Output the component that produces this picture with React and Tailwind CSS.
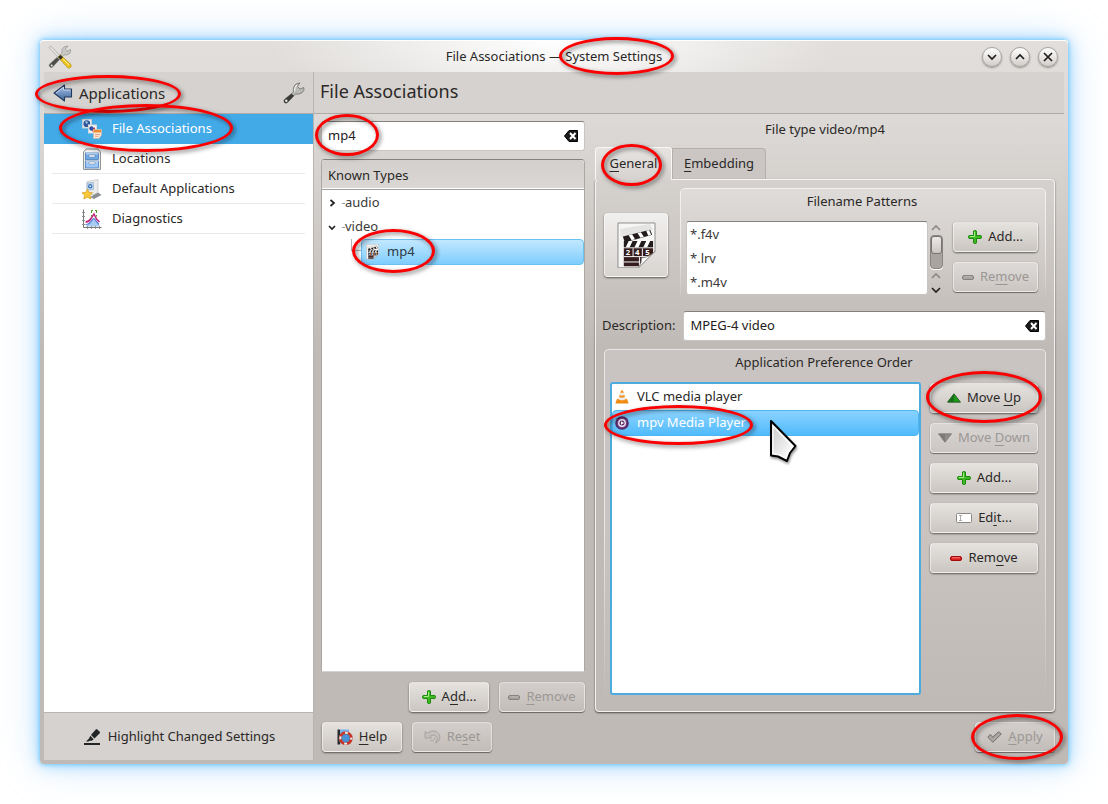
import React, { useState } from 'react'
import clsx from 'clsx'

const patterns = ['*.f4v', '*.lrv', '*.m4v']

/* ---------- icons ---------- */

function ToolsIcon() {
  return (
    <svg width="24" height="24" viewBox="0 0 24 24" aria-hidden="true">
      <path d="M2 22 Q0 20 2 18.500 L14 8 Q13 4 16 2 L20 1 L17.500 4 L19 6.500 L22.500 4.500 Q23.500 7 21 9 Q18.500 10.500 16 9.800 L5 21.500 Q3.500 23.500 2 22 Z" fill="#c9c9c7" stroke="#8a8a88" strokeWidth=".6" />
      <path d="M2 22 Q0.500 20.500 2 19 L9 12.500 L11.500 14.500 L5 21.500 Q3.500 23 2 22 Z" fill="#4c4c4a" />
      <circle cx="3.700" cy="20.400" r="1" fill="#eee" />
      <path d="M1 2.500 L3 1 L12 11 L10.500 12.500 Z" fill="#e4e4e2" stroke="#999" strokeWidth=".6" />
      <path d="M10 12 L12.500 10 L23 19.500 Q24 22 21.500 23 Q19.500 23.300 18 21 Z" fill="#efc21c" stroke="#a8860d" strokeWidth=".6" />
      <path d="M10 12 L12.500 10 L15 12.300 L12.500 14.800 Z" fill="#33312e" />
      <path d="M15 14 L21 20" stroke="#fff3a0" strokeWidth="1" />
    </svg>
  )
}

function BackIcon() {
  return (
    <svg width="20" height="18" viewBox="0 0 20 18" aria-hidden="true">
      <defs>
        <linearGradient id="back" x1="0" y1="0" x2="0" y2="1">
          <stop offset="0" stopColor="#a9c4e6" />
          <stop offset="1" stopColor="#3f659b" />
        </linearGradient>
      </defs>
      <path d="M1 9 L11.500 1 V5 H18.500 V13 H11.500 V17 Z" fill="url(#back)" stroke="#22395e" strokeWidth="1.100" strokeLinejoin="round" />
      <path d="M3 9 L10.500 3.200 V6 H17.500" fill="none" stroke="#d5e3f5" strokeWidth=".8" />
    </svg>
  )
}

function WrenchIcon() {
  return (
    <svg width="22" height="22" viewBox="0 0 22 22" aria-hidden="true">
      <path d="M1.500 20.500 Q0 18.500 2 17 L10.500 10 Q9.500 4.500 13 2 L17 .800 L14.500 4.500 L17 7 L20.800 5.500 Q22 8.500 19 10.800 Q16 12.800 12.500 12 L5 20 Q3 22 1.500 20.500 Z" fill="#b9b9b6" stroke="#666" strokeWidth=".7" />
      <path d="M1.500 20.500 Q0 18.500 2 17 L8.500 11.700 L11 13.700 L5 20 Q3 22 1.500 20.500 Z" fill="#3a3a39" />
      <path d="M11.500 9.500 Q11.500 5 14 3" stroke="#fff" fill="none" />
      <circle cx="3.300" cy="18.700" r="1.200" fill="#f0f0ee" />
    </svg>
  )
}

function AssociationsIcon() {
  return (
    <svg width="20" height="20" viewBox="0 0 20 20" aria-hidden="true">
      <rect x=".500" y=".500" width="9" height="8.500" fill="#e8eef5" stroke="#c5ccd4" />
      <circle cx="4.800" cy="4.700" r="3.400" fill="#2d5596" />
      <path d="M3 3 Q5 1.500 6 3.500 L4.500 5 Z M5.500 6 L7.500 5 L6.500 7.300 Z" fill="#a9c6e8" />
      <rect x="6.500" y="6" width="8" height="8" fill="#f6f6f6" stroke="#d9d9d9" />
      <circle cx="9.500" cy="9.500" r="2.200" fill="#2a4fa0" />
      <path d="M10 12.500 L12.500 8 L14 12.500 Z" fill="#d12222" />
      <path d="M11.500 10.500 H19.500 V16 L17 19.500 H11.500 Z" fill="#fbe9d8" stroke="#c9b8a5" strokeWidth=".7" />
      <rect x="12" y="11" width="7" height="2.500" fill="#f08a2e" />
      <path d="M13 15.500 H18 M13 17.300 H16.500" stroke="#e79b86" strokeWidth=".9" />
    </svg>
  )
}

function LocationsIcon() {
  return (
    <svg width="20" height="22" viewBox="0 0 20 22" aria-hidden="true">
      <path d="M4 1 H16 L18.500 4 V21.500 H1.500 V4 Z" fill="#e9e9e8" stroke="#858a8f" strokeWidth=".9" />
      <path d="M4.500 2 H15.500 L17 3.800 H3 Z" fill="#fafafa" />
      <rect x="3.500" y="5" width="13" height="6.500" fill="#6fa8e6" stroke="#3f74b2" strokeWidth=".7" />
      <rect x="3.500" y="13" width="13" height="7" fill="#9cc6f5" stroke="#3f74b2" strokeWidth=".7" />
      <path d="M4 5.800 H16 M4 13.800 H16" stroke="#d5e8fc" />
      <path d="M7 7 H13 V9 H7 Z M7 14 H13 V16 H7 Z" fill="#fff" stroke="#5d7b98" strokeWidth=".5" />
    </svg>
  )
}

function DefaultAppsIcon() {
  return (
    <svg width="20" height="21" viewBox="0 0 20 21" aria-hidden="true">
      <path d="M5 2.500 L16 .500 V15 L5 16 Z" fill="#ececea" stroke="#bbb" strokeWidth=".6" />
      <path d="M8 18 L16 13.500 L19.500 16 L12 20 Z" fill="#8b8f93" />
      <path d="M5 4 L11.500 3.500 V10.500 L5 11 Z" fill="#c3d9f0" stroke="#8aa5c4" strokeWidth=".6" />
      <circle cx="8.200" cy="7.200" r="2.200" fill="#3b74b8" />
      <circle cx="8.200" cy="7.200" r=".9" fill="#dcebfa" />
      <path d="M5.500 10 L7 13.400 L10.500 13.700 L8 16.200 L8.800 20 L5.300 18.200 L1.800 20 L2.500 16.300 L0 13.700 L4 13.300 Z" fill="#f9c937" stroke="#d69c1c" strokeWidth=".7" />
    </svg>
  )
}

function DiagnosticsIcon() {
  return (
    <svg width="20" height="20" viewBox="0 0 20 20" aria-hidden="true">
      <path d="M3.500 17.500 L8 13 L12 9.500 L16 14 L18 17.500 Z" fill="#a9ccf3" />
      <path d="M3.500 15.500 Q8 15.500 10 11 Q12 8 13.500 11.500 L17 15.500" fill="none" stroke="#5580d4" strokeWidth="1.200" />
      <path d="M3.500 13 Q7 13 9 9.500 L12 5 L14.500 10 L17.500 13" fill="none" stroke="#c22a80" strokeWidth="1.600" />
      <path d="M9 1.500 H11 M13 1.500 H15 M9.500 1 V4 M14.500 1 V4 M9.500 6 V7.500 M14.500 6 V7.500" stroke="#4c9b2c" strokeWidth="1" />
      <path d="M1.500 .500 V18.500 H19.500" fill="none" stroke="#777" />
      <path d="M0 3.500 H3 M0 7.500 H3 M0 11.500 H3 M0 15.500 H3 M5.500 17 V20 M9.500 17 V20 M13.500 17 V20 M17.500 17 V20" stroke="#888" strokeWidth=".9" />
    </svg>
  )
}

function HighlightIcon() {
  return (
    <svg width="16" height="16" viewBox="0 0 16 16" fill="#232627" aria-hidden="true">
      <path d="M12.800 0 L16 3 L15.500 4.500 L10.500 9.500 L7 6 L11.500 .800 Z" />
      <path d="M6.300 6.800 L9.700 10.200 L7.800 11.800 H5.500 L4.500 12.500 H2 L5 9.500 Z" />
      <rect x="0" y="14" width="16" height="2" />
    </svg>
  )
}

function ClearIcon() {
  return (
    <svg width="14" height="12" viewBox="0 0 14 12" aria-hidden="true">
      <path d="M.500 6 L5 .500 H13.500 V11.500 H5 Z" fill="#1c1c1c" stroke="#000" strokeLinejoin="round" />
      <path d="M6 3 L11.500 9 M11.500 3 L6 9" stroke="#fff" strokeWidth="2" />
    </svg>
  )
}

function ClapperIcon({ size = 16 }) {
  return (
    <svg width={size} height={size * 1.2} viewBox="0 0 40 48" aria-hidden="true">
      <path d="M1 1 H39 V30 L22 47 H1 Z" fill="#f6f6f5" stroke="#8d8d8b" strokeWidth="1" />
      <path d="M3 7 L34 2 L37 8 L4 15 Z" fill="#e4e4e3" />
      <path d="M6 15 L34 8 L36 13 L8 21 Z" fill="#241c1c" />
      <path d="M12 13.500 L15 18.600 L18.500 17.600 L15.500 12.600 Z M21 11.300 L24 16.200 L27.500 15.200 L24.500 10.400 Z M30 9 L32 14 L35 13 L33 8.200 Z" fill="#fff" />
      <rect x="7" y="19.500" width="30" height="6.500" fill="#241c1c" />
      <path d="M12 19.500 H16 L13 26 H9 Z M21 19.500 H25 L22 26 H18 Z M30 19.500 H34 L31 26 H27 Z" fill="#fff" />
      <path d="M7 27 H37 V32 L23 45.500 H7 Z" fill="#351c1d" />
      <path d="M7 35.500 H33 M16.500 27 V35.500 M26 27 V35.500 M23 36 V45 M7 41 H23" stroke="#fff" strokeWidth="1" />
      <text x="9" y="34" fontSize="8" fontWeight="bold" fill="#fff" fontFamily="Noto Sans, sans-serif">2</text>
      <text x="18.500" y="34" fontSize="8" fontWeight="bold" fill="#fff" fontFamily="Noto Sans, sans-serif">4</text>
      <text x="29" y="34" fontSize="8" fontWeight="bold" fill="#fff" fontFamily="Noto Sans, sans-serif">5</text>
      <path d="M39 30 L22 47 Q26 41 25 37 Q34 36 39 30 Z" fill="#fdfdfd" stroke="#8d8d8b" strokeWidth=".8" />
    </svg>
  )
}

function PlusIcon() {
  return (
    <svg width="14" height="14" viewBox="0 0 14 14" aria-hidden="true">
      <path d="M5.500 1 Q7 0 8.500 1 V5.500 H13 Q14 7 13 8.500 H8.500 V13 Q7 14 5.500 13 V8.500 H1 Q0 7 1 5.500 H5.500 Z" fill="#3fba23" stroke="#1c8a0e" strokeWidth="1" />
      <path d="M6.500 1.800 V6.500 H2" fill="none" stroke="#a5ec8a" strokeWidth="1" />
    </svg>
  )
}

function MinusIcon({ off }) {
  return (
    <svg width="12" height="5" viewBox="0 0 12 5" aria-hidden="true">
      <rect x=".500" y=".500" width="11" height="4" rx="1.500" fill={off ? '#a5a2a0' : '#d91e1e'} stroke={off ? '#858280' : '#a30c0c'} />
      <path d="M2 1.800 H10" stroke={off ? '#bdbab8' : '#f58c8c'} strokeWidth=".9" />
    </svg>
  )
}

function UpIcon() {
  return (
    <svg width="14" height="10" viewBox="0 0 14 10" aria-hidden="true">
      <path d="M7 .800 L13.500 9.200 H.500 Z" fill="#1c9a18" stroke="#1d4d1b" strokeWidth=".8" />
      <path d="M7 1 V9 H1 Z" fill="#17701a" />
    </svg>
  )
}

function DownIcon() {
  return (
    <svg width="14" height="10" viewBox="0 0 14 10" aria-hidden="true">
      <path d="M.500 .800 H13.500 L7 9.200 Z" fill="#8f8c8a" stroke="#777472" strokeWidth=".8" />
      <path d="M1 1 H7 V9 Z" fill="#7d7a78" />
    </svg>
  )
}

function EditIcon() {
  return (
    <svg width="16" height="10" viewBox="0 0 16 10" aria-hidden="true">
      <rect x=".500" y=".500" width="15" height="9" rx="1" fill="#fff" stroke="#8a8785" />
      <path d="M3 2.500 H6 M4.500 2.500 V7.500 M3 7.500 H6" stroke="#999" strokeWidth=".8" />
    </svg>
  )
}

function HelpIcon() {
  return (
    <svg width="16" height="16" viewBox="0 0 16 16" aria-hidden="true">
      <path d="M.500 .500 H3 V15.500 H.500 Z" fill="#2b2b2b" />
      <path d="M3 .500 H12 V6 L3 15.500 Z" fill="#76b2e8" />
      <circle cx="8.800" cy="9.200" r="5.500" fill="#4a93d8" stroke="#f1ece8" strokeWidth="2.600" />
      <circle cx="8.800" cy="9.200" r="5.500" fill="none" stroke="#d5301f" strokeWidth="2.600" strokeDasharray="5.600 3.040" strokeDashoffset="-1.500" />
      <circle cx="8.800" cy="9.200" r="6.700" fill="none" stroke="#9a4a42" strokeWidth=".5" />
      <circle cx="8.800" cy="9.200" r="4.100" fill="#4a93d8" stroke="#7b4a48" strokeWidth=".5" />
    </svg>
  )
}

function ResetIcon() {
  return (
    <svg width="17" height="14" viewBox="0 0 17 14" aria-hidden="true">
      <path d="M1 1.500 L3.200 3.200 Q8 -.500 12.500 1.500 Q16.500 4 16 8 Q15.500 11.500 11.500 13 Q14 10 13 7.500 Q11 4 6 6 L7.500 8 H1 Z" fill="#c3bfbc" stroke="#a09c99" strokeWidth=".8" strokeLinejoin="round" />
      <path d="M6.500 10.500 Q10.500 11.500 11 7.500" fill="none" stroke="#a09c99" strokeWidth=".8" />
    </svg>
  )
}

function ApplyIcon() {
  return (
    <svg width="15" height="12" viewBox="0 0 15 12" aria-hidden="true">
      <path d="M.800 6 L3.200 3.500 L5.800 6 L11.800 .700 L14.300 3 L5.800 11.300 Z" fill="#a5a19f" stroke="#716e6c" strokeWidth="1" strokeLinejoin="round" />
      <path d="M2.300 6 L5.800 9.200 L12.500 3" fill="none" stroke="#c9c6c4" strokeWidth=".8" strokeDasharray="1 1" />
    </svg>
  )
}

function VlcIcon() {
  return (
    <svg width="14" height="14" viewBox="0 0 14 14" aria-hidden="true">
      <path d="M2 9 H12 L13.500 13 Q13.500 13.600 13 13.600 H1 Q.500 13.600 .500 13 Z" fill="#f08a12" />
      <path d="M6 .500 H8 L11 10.500 Q7 12.800 3 10.500 Z" fill="#f4901e" />
      <path d="M5.300 2.800 H8.700 L9.400 5 Q7 6 4.600 5 Z M4 7 Q7 8.500 10 7 L10.700 9.300 Q7 11 3.300 9.300 Z" fill="#ececec" />
    </svg>
  )
}

function MpvIcon() {
  return (
    <svg width="14" height="14" viewBox="0 0 14 14" aria-hidden="true">
      <circle cx="7" cy="7" r="6.800" fill="#54275f" />
      <circle cx="7" cy="7" r="5.200" fill="#75408a" />
      <circle cx="7" cy="7" r="3.900" fill="#efe6f2" />
      <circle cx="7" cy="7" r="2.500" fill="#5e2d6b" />
      <path d="M6 5.200 L9 7 L6 8.800 Z" fill="#fff" />
    </svg>
  )
}

function Pointer() {
  return (
    <svg className="pointer-events-none absolute -top-1 left-[156px] z-20 drop-shadow-[1px_2px_1px_rgba(0,0,0,0.4)]" width="28" height="44" viewBox="0 0 28 44" aria-hidden="true">
      <defs>
        <linearGradient id="ptr" x1="0" y1="0" x2="1" y2="1">
          <stop offset="0" stopColor="#c4c4c4" />
          <stop offset=".8" stopColor="#fbfbfb" />
        </linearGradient>
      </defs>
      <path d="M2 2 V36.500 L9 37.500 L18 42 L21 34 L26.500 27 Z" fill="url(#ptr)" stroke="#000" strokeWidth="2" strokeLinejoin="round" />
      <path d="M4 7 V34.500 L10 35.500 L16.500 39 L19 33 L23.500 27 Z" fill="none" stroke="#fff" strokeWidth="1.200" />
    </svg>
  )
}

function Chevron({ d, className, w = 10, h = 6, stroke = '#222' }) {
  return (
    <svg className={className} width={w} height={h} viewBox={`0 0 ${w} ${h}`} aria-hidden="true">
      <path d={d} fill="none" stroke={stroke} strokeWidth="1.700" />
    </svg>
  )
}

/* ---------- shared parts ---------- */

function Ring({ className }) {
  return (
    <span className={clsx('pointer-events-none absolute z-30 rounded-[50%] border-3 border-[#fb0000] drop-shadow-[2px_2px_2px_rgba(0,0,0,0.5)]', className)} />
  )
}

function Button({ children, icon, disabled, className }) {
  return (
    <button
      type="button"
      disabled={disabled}
      className={clsx(
        'relative flex h-[30px] shrink-0 items-center justify-center gap-1.5 rounded border border-white/50 bg-linear-to-b whitespace-nowrap',
        disabled
          ? 'from-white/30 to-white/5 text-[#9b9794] shadow-[0_1px_1px_rgba(0,0,0,0.45),0_0_1px_rgba(0,0,0,0.3)]'
          : 'from-[#e5e2df] to-[#cbc6c1] shadow-[0_1px_2px_rgba(0,0,0,0.55)]',
        className
      )}>
      {icon}
      <span>{children}</span>
    </button>
  )
}

// underlined shortcut letter
function Key({ children }) {
  return <span className="underline decoration-1 underline-offset-3">{children}</span>
}

function TextField({ id, label, value, onChange, onClear, className, children }) {
  return (
    <div className={clsx('relative flex h-[30px] items-center rounded-[3px] border border-[#c9c5c2] border-t-[#85817e] bg-white px-1.5', className)}>
      <input id={id} aria-label={label} value={value} onChange={onChange} className="min-w-0 flex-1 bg-transparent text-[#232020] outline-none" />
      <button type="button" aria-label="Clear" onClick={onClear}><ClearIcon /></button>
      {children}
    </div>
  )
}

function Group({ title, className, children }) {
  return (
    <section className={clsx('relative flex flex-col rounded bg-linear-to-b to-white/0 pt-1 pr-2 pl-1.5', className)}>
      <div className="pointer-events-none absolute inset-0 rounded border border-white/60 shadow-[0_0_1px_rgba(0,0,0,0.6)] mask-linear-[180deg,black_50%,transparent]" />
      <h3 className="mb-[11px] text-center leading-[18px]">{title}</h3>
      {children}
    </section>
  )
}

function WindowButton({ label, d }) {
  return (
    <button type="button" aria-label={label} className="flex size-5 items-center justify-center rounded-full border border-[#a8a39f] bg-linear-to-b from-white to-[#d2cdc9] shadow-[0_1px_2px_rgba(0,0,0,0.35)]">
      <svg width="10" height="10" viewBox="0 0 10 10" aria-hidden="true">
        <path d={d} fill="none" stroke="#1d1d1d" strokeWidth="1.700" />
      </svg>
    </button>
  )
}

function SideItem({ icon, children, active, ring }) {
  return (
    <li>
      <a
        href="#"
        aria-current={active ? 'page' : undefined}
        className={clsx('relative flex h-[30px] items-center px-2', active ? 'bg-[#43aae8] text-white' : 'bg-white')}>
        <span className={clsx('flex h-full flex-1 items-center gap-2.5 border-b pt-px pl-[30px]', active ? 'border-transparent' : 'border-[#e9e9e9]')}>
          <span className="flex w-5 justify-center">{icon}</span>
          {children}
        </span>
        {ring && <Ring className="-top-2.5 -bottom-2 left-[15px] w-[174px]" />}
      </a>
    </li>
  )
}

/* ---------- panels ---------- */

function TitleBar() {
  return (
    <header className="grid h-8 grid-cols-[1fr_auto_1fr] items-center bg-[radial-gradient(ellipse_28%_260%_at_50%_0%,white,transparent)] px-2 pt-px">
      <ToolsIcon />
      <h1>
        File Associations — <span className="relative">System Settings<Ring className="-top-2.5 -right-3 -bottom-2.5 -left-1.5" /></span>
      </h1>
      <div className="flex justify-end gap-2 pr-0.5">
        <WindowButton label="Minimize" d="M1 3 L5 7 L9 3" />
        <WindowButton label="Maximize" d="M1 7 L5 3 L9 7" />
        <WindowButton label="Close" d="M1 1 L9 9 M9 1 L1 9" />
      </div>
    </header>
  )
}

function Sidebar() {
  return (
    <nav className="flex w-[270px] shrink-0 flex-col border-r border-[#b9b4b0] bg-white">
      <div className="flex h-[42px] items-center justify-between border-b border-[#aeaaa7] bg-[#d6d2cf] px-2">
        <button type="button" className="relative flex items-center gap-1.5 pl-px text-[15px] leading-5">
          <BackIcon />
          Applications
          <Ring className="-top-2 -right-4 -bottom-2.5 -left-[17px]" />
        </button>
        <button type="button" aria-label="Configure"><WrenchIcon /></button>
      </div>
      <ul className="flex-1">
        <SideItem icon={<AssociationsIcon />} active ring>File Associations</SideItem>
        <SideItem icon={<LocationsIcon />}>Locations</SideItem>
        <SideItem icon={<DefaultAppsIcon />}>Default Applications</SideItem>
        <SideItem icon={<DiagnosticsIcon />}>Diagnostics</SideItem>
      </ul>
      <button type="button" className="flex h-12 items-center justify-center gap-2 border-t border-[#b9b4b0] bg-[#d6d2cf] pl-0.5">
        <HighlightIcon />
        Highlight Changed Settings
      </button>
    </nav>
  )
}

function KnownTypes() {
  const [filter, setFilter] = useState('mp4')

  return (
    <div className="flex w-[264px] shrink-0 flex-col pt-px">
      <TextField label="Search types" value={filter} onChange={(e) => setFilter(e.target.value)} onClear={() => setFilter('')}>
        <Ring className="-top-2 -bottom-1.5 -left-[7px] w-16" />
      </TextField>
      <div className="mt-2 flex flex-1 flex-col rounded-t border border-[#aba7a4] border-t-[#85817e] border-b-[#d6d2cf] bg-white">
        <h3 className="h-[30px] rounded-t-sm border-b border-[#a29e9b] bg-linear-to-b from-[#d3cfcc] to-[#dad7d4] px-1.5 leading-[30px] shadow-[inset_0_-1px_0_white]">
          Known Types</h3>
        <ul className="pt-px">
          <li className="flex h-6 items-center pl-1.5 text-[#3c3a39]">
            <span className="flex w-[14px] shrink-0"><Chevron w={7} h={8} d="M1.500 1 L5 4 L1.500 7" className="ml-px" /></span>
            <span className="w-[3px] border-t border-[#999]" />
            audio
          </li>
          <li>
            <div className="flex h-6 items-center pl-1.5 text-[#3c3a39]">
              <span className="flex w-[14px] shrink-0"><Chevron w={8} h={7} d="M1 2 L4 5 L7 2" /></span>
              <span className="w-[3px] border-t border-[#999]" />
              video
            </div>
            <ul className="pl-[29px]">
              <li className="relative flex h-[26px]">
                <span className="h-3 w-2.5 shrink-0 border-b border-l border-[#b0b0b0]" />
                <span className="flex flex-1 items-center gap-2 rounded-sm border border-[#6cc1f3] bg-linear-to-b from-[#c2e8ff] to-[#7dcdfd] pl-1 text-[#2c3a44]">
                  <ClapperIcon size={13} />
                  mp4
                </span>
                <Ring className="-top-2.5 -bottom-2 left-px w-[83px]" />
              </li>
            </ul>
          </li>
        </ul>
      </div>
      <div className="mt-2.5 flex justify-end gap-2.5">
        <Button icon={<PlusIcon />} className="w-20">A<Key>d</Key>d...</Button>
        <Button icon={<MinusIcon off />} disabled className="w-[86px]"><Key>R</Key>emove</Button>
      </div>
    </div>
  )
}

function ScrollBar() {
  return (
    <div className="ml-px flex w-3.5 flex-col items-center pt-1 pb-0.5" aria-hidden="true">
      <Chevron d="M1 5 L5 1 L9 5" stroke="#8d8987" />
      <div className="mt-1 flex-1 rounded border border-[#8a8582] bg-[#aaa4a0] shadow-[0_1px_0_white]">
        <div className="h-[18px] w-[11px] rounded-[3px] border border-[#77726f] bg-linear-to-b from-[#eceae8] to-[#cbc6c2]" />
      </div>
      <Chevron d="M1 5 L5 1 L9 5" stroke="#8d8987" className="mt-1" />
      <Chevron d="M1 1 L5 5 L9 1" className="mt-2" />
    </div>
  )
}

function FileType() {
  const [description, setDescription] = useState('MPEG-4 video')

  return (
    <div className="flex min-w-0 flex-1 flex-col">
      <h3 className="mb-[9px] text-center leading-[18px]">File type video/mp4</h3>
      <div className="flex" role="tablist">
        <button type="button" role="tab" aria-selected="true" className="relative z-10 -mb-px h-[33px] w-[77px] rounded-t border border-b-0 border-white/80 bg-linear-to-b from-[#e6e3e1] to-[#d6d2cf] text-center">
          <Key>G</Key>eneral
          <Ring className="-top-1 -bottom-1.5 left-[5px] w-[61px]" />
        </button>
        <button type="button" role="tab" aria-selected="false" className="mt-px h-[31px] w-[94px] rounded-tr border border-b-0 border-[#b5afac] bg-[#cbc6c3]">
          <Key>E</Key>mbedding
        </button>
      </div>
      <div className="flex flex-1 flex-col rounded border border-white/80 px-2 pt-2 pb-2 shadow-[0_1px_2px_rgba(0,0,0,0.6)]">
        <div className="flex items-center gap-3">
          <button type="button" aria-label="Choose icon" className="flex size-16 items-center justify-center rounded border border-white/60 bg-linear-to-b from-[#f1efee] to-[#d8d4d0] shadow-[0_1px_2px_rgba(0,0,0,0.55)]">
            <ClapperIcon size={39} />
          </button>
          <Group title="Filename Patterns" className="flex-1 from-white/25 pb-[7px]">
            <div className="flex">
              <ul className="flex-1 rounded-[3px] border border-[#c9c5c2] border-t-[#85817e] bg-white pl-[3px] text-[#3c3a39]">
                {patterns.map((p) => <li key={p} className="h-6 leading-6">{p}</li>)}
              </ul>
              <ScrollBar />
              <div className="ml-2.5 flex flex-col gap-2.5 pt-px">
                <Button icon={<PlusIcon />} className="w-[85px]">Add...</Button>
                <Button icon={<MinusIcon off />} disabled className="w-[85px]">Re<Key>m</Key>ove</Button>
              </div>
            </div>
          </Group>
        </div>
        <div className="mt-[9px] mb-2 flex items-center gap-2">
          <label htmlFor="description" className="-ml-0.5">Description:</label>
          <TextField id="description" value={description} onChange={(e) => setDescription(e.target.value)} onClear={() => setDescription('')} className="flex-1" />
        </div>
        <Group title="Application Preference Order" className="flex-1 from-white/15 via-white/15 pb-2">
          <div className="flex flex-1 gap-[9px]">
            <ul className="min-w-0 flex-1 rounded-[3px] border-2 border-[#4cabdf] bg-white">
              <li className="flex h-[26px] items-center gap-2 pl-[3px]"><VlcIcon />VLC media player</li>
              <li className="relative flex h-[26px] items-center gap-2 rounded-sm border border-[#4db5f3] bg-linear-to-b from-[#88d2ff] to-[#50bbfc] pl-0.5 text-white">
                <MpvIcon />mpv Media Player
                <Ring className="-top-1.5 -bottom-2.5 -left-[9px] w-[149px]" />
                <span className="absolute top-3 left-0"><Pointer /></span>
              </li>
            </ul>
            <div className="flex w-[108px] flex-col gap-2.5 pt-px">
              <div className="relative">
                <Button icon={<UpIcon />} className="w-full">Move <Key>U</Key>p</Button>
                <Ring className="-top-3 -right-1 -bottom-2.5 -left-1" />
              </div>
              <Button icon={<DownIcon />} disabled>Move <Key>D</Key>own</Button>
              <Button icon={<PlusIcon />}>Add...</Button>
              <Button icon={<EditIcon />}>Ed<Key>i</Key>t...</Button>
              <Button icon={<MinusIcon />}>Rem<Key>o</Key>ve</Button>
            </div>
          </div>
        </Group>
      </div>
    </div>
  )
}

export default function App() {
  return (
    <div className="flex min-h-screen bg-white p-10 font-['Noto_Sans',sans-serif] text-[13px] text-[#2a2827]">
      <div className="flex min-w-0 flex-1 flex-col rounded bg-[linear-gradient(#e1dedb,#dcd9d6_80px,#c0bab6_310px)] shadow-[inset_0_1px_0_white,0_0_5px_#5cc0fa,0_0_16px_rgba(90,185,250,0.6),0_0_40px_rgba(130,195,250,0.4)]">
        <TitleBar />
        <div className="flex flex-1 px-1 pb-1">
          <Sidebar />
          {/* settings module */}
          <main className="flex min-w-0 flex-1 flex-col">
            <h2 className="h-[42px] border-b border-[#aeaaa7] bg-[#d6d2cf] px-1.5 text-lg leading-[39px]">File Associations</h2>
            <div className="flex flex-1 gap-2.5 pt-1.5 pr-[9px] pl-[7px]">
              <KnownTypes />
              <FileType />
            </div>
            <footer className="flex gap-2.5 pt-2.5 pr-[9px] pb-2 pl-2">
              <Button icon={<HelpIcon />} className="w-20"><Key>H</Key>elp</Button>
              <Button icon={<ResetIcon />} disabled className="w-20">Re<Key>s</Key>et</Button>
              <div className="relative ml-auto">
                <Button icon={<ApplyIcon />} disabled className="w-20"><Key>A</Key>pply</Button>
                <Ring className="-top-2 -right-2 -bottom-2 -left-1" />
              </div>
            </footer>
          </main>
        </div>
      </div>
    </div>
  )
}
